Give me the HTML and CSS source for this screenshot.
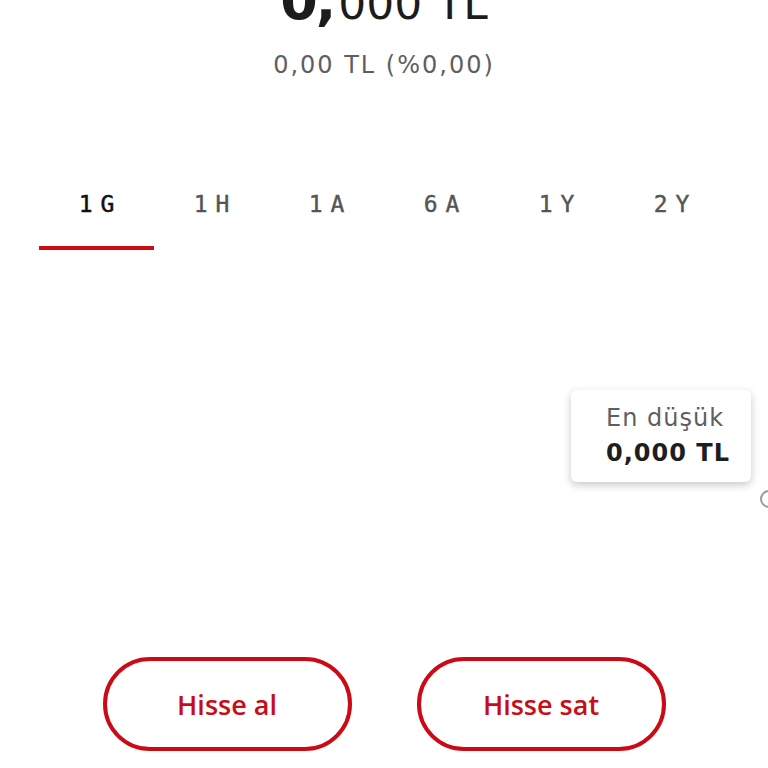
FILE: index.html
```html
<!DOCTYPE html>
<html lang="tr">
<head>
  <meta charset="UTF-8">
  <meta name="viewport" content="width=device-width, initial-scale=1.0">
  <title>Hisse detayı</title>
  <link rel="stylesheet" href="styles.css">
</head>
<body>
  <div class="screen">
    <!-- Fiyat başlığı -->
    <div class="price-head">
      <div class="price"><b>0,</b><span>000 TL</span></div>
      <div class="change">0,00 TL (%0,00)</div>
    </div>

    <!-- Periyot sekmeleri -->
    <div class="tabs">
      <div class="tab active">1G</div>
      <div class="tab">1H</div>
      <div class="tab">1A</div>
      <div class="tab">6A</div>
      <div class="tab">1Y</div>
      <div class="tab">2Y</div>
    </div>

    <!-- Grafik alanı -->
    <div class="chart">
      <div class="tooltip">
        <div class="tip-label">En düşük</div>
        <div class="tip-value">0,000 TL</div>
      </div>
      <div class="chart-dot"></div>
    </div>

    <!-- Aksiyonlar -->
    <div class="actions">
      <button class="pill-btn">Hisse al</button>
      <button class="pill-btn">Hisse sat</button>
    </div>
  </div>
</body>
</html>
```

FILE: styles.css
```css
body {
  margin: 0;
  background: #fff;
  font-family: 'DejaVu Sans', 'Noto Sans', sans-serif;
  color: #1f1f1f;
  overflow: hidden;
}
.screen {
  width: 768px;
  height: 768px;
  display: flex;
  flex-direction: column;
  overflow: hidden;
}
.price-head {
  height: 160px;
  flex-shrink: 0;
  display: flex;
  flex-direction: column;
  align-items: center;
}
.price {
  font-size: 54px;
  line-height: 54px;
  margin-top: -26px;
  color: #1c1c1c;
}
.price b {
  font-weight: 700;
  letter-spacing: -2px;
}
.price span {
  font-size: 44px;
  font-weight: 400;
  margin-left: 4px;
}
.change {
  margin-top: 20px;
  font-size: 24px;
  line-height: 28px;
  letter-spacing: 2px;
  color: #5f5f5f;
}
.tabs {
  display: grid;
  grid-template-columns: repeat(6, 1fr);
  padding: 0 39px;
  flex-shrink: 0;
}
.tab {
  height: 90px;
  box-sizing: border-box;
  padding-top: 31px;
  text-align: center;
  font-family: 'DejaVu Sans Mono', monospace;
  font-size: 23px;
  letter-spacing: 8px;
  text-indent: 8px;
  color: #555;
  -webkit-text-stroke: 0.4px #555;
  border-bottom: 4px solid transparent;
}
.tab.active {
  color: #111;
  -webkit-text-stroke: 0.5px #111;
  border-bottom-color: #d00a14;
}
.chart {
  height: 407px;
  flex-shrink: 0;
  position: relative;
}
.tooltip {
  position: absolute;
  top: 140px;
  right: 17px;
  width: 180px;
  height: 92px;
  box-sizing: border-box;
  padding: 11px 0 0 35px;
  background: #fff;
  border-radius: 6px;
  box-shadow: 0 3px 8px rgba(0,0,0,0.22);
}
.tip-label {
  font-size: 24px;
  line-height: 35px;
  letter-spacing: 1px;
  color: #5f5f5f;
}
.tip-value {
  font-size: 24px;
  line-height: 35px;
  font-weight: 700;
  letter-spacing: 1px;
  color: #1e1e1e;
}
.chart-dot {
  position: absolute;
  top: 240px;
  left: 760px;
  width: 14px;
  height: 14px;
  border: 2px solid #9a9a9a;
  border-radius: 50%;
  background: #fff;
}
.actions {
  display: flex;
  justify-content: center;
  gap: 65px;
}
.pill-btn {
  width: 249px;
  height: 94px;
  border: 4px solid #cc0a15;
  border-radius: 47px;
  background: #fff;
  color: #c80d18;
  font-family: 'Open Sans', 'Noto Sans', sans-serif;
  font-size: 27px;
  font-weight: 600;
}
```
